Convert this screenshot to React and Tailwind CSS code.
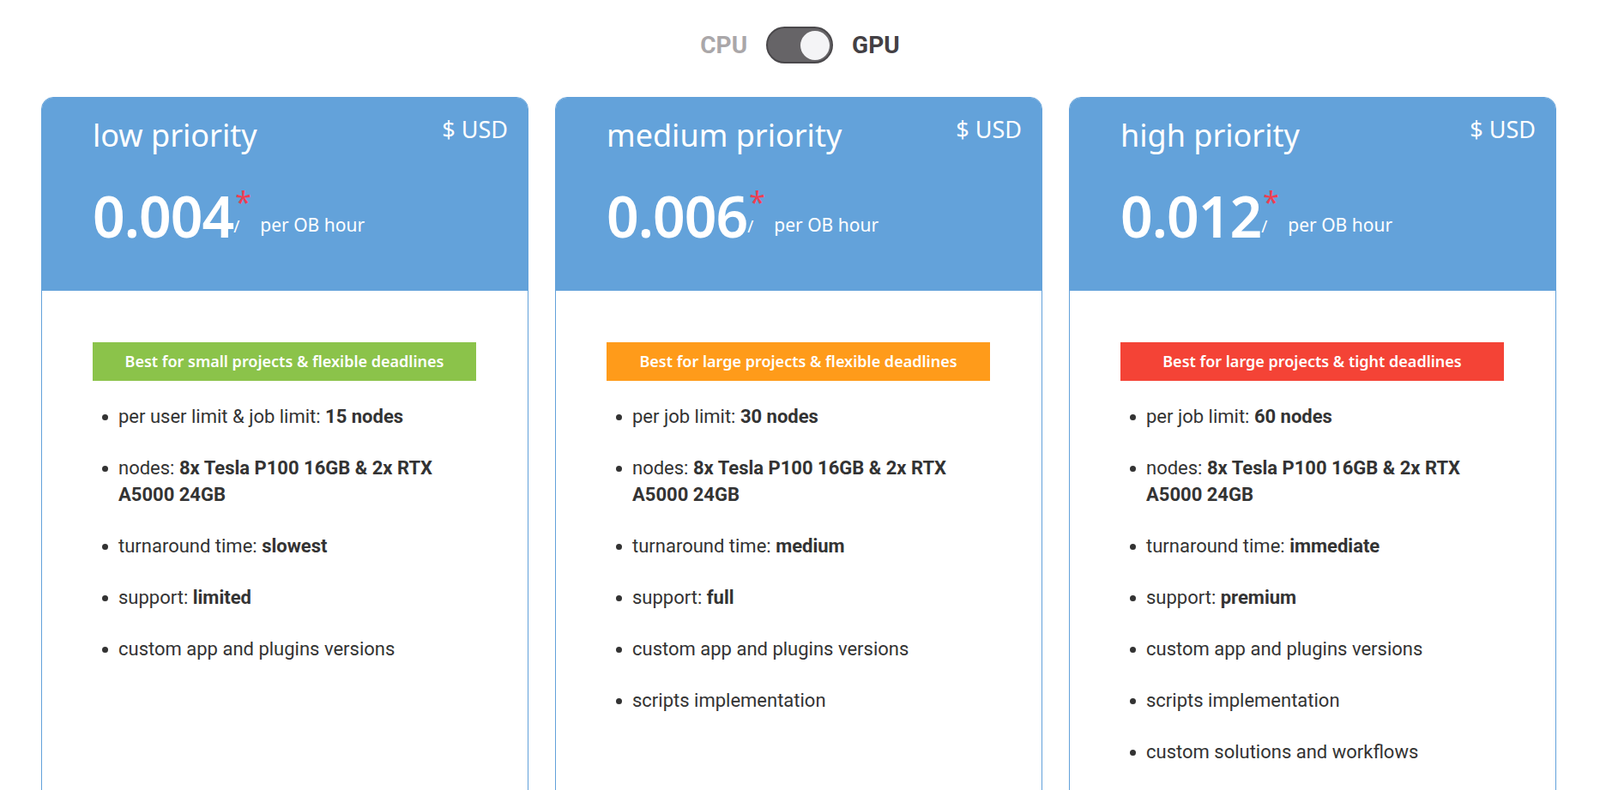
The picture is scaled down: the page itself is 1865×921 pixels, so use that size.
const cards = [
  { title: "low priority", price: "0.004", badge: "Best for small projects & flexible deadlines", color: "bg-[#8bc34a]",
    items: [["per user limit & job limit: ", "15 nodes"], ["nodes: ", "8x Tesla P100 16GB & 2x RTX A5000 24GB"], ["turnaround time: ", "slowest"], ["support: ", "limited"], ["custom app and plugins versions", ""]] },
  { title: "medium priority", price: "0.006", badge: "Best for large projects & flexible deadlines", color: "bg-[#ff9b1a]",
    items: [["per job limit: ", "30 nodes"], ["nodes: ", "8x Tesla P100 16GB & 2x RTX A5000 24GB"], ["turnaround time: ", "medium"], ["support: ", "full"], ["custom app and plugins versions", ""], ["scripts implementation", ""]] },
  { title: "high priority", price: "0.012", badge: "Best for large projects & tight deadlines", color: "bg-[#f44336]",
    items: [["per job limit: ", "60 nodes"], ["nodes: ", "8x Tesla P100 16GB & 2x RTX A5000 24GB"], ["turnaround time: ", "immediate"], ["support: ", "premium"], ["custom app and plugins versions", ""], ["scripts implementation", ""], ["custom solutions and workflows", ""]] },
];

export default function App() {
  return (
    <div className="w-[1865px] h-[921px] overflow-hidden bg-white">
      <div className="flex items-center justify-center pt-[30px] h-[113px] pb-[38px] gap-[22px] font-[family-name:Roboto,sans-serif] font-bold text-[28px]">
        <span className="text-[#aaa7a9]">CPU</span>
        <div className="w-[78px] h-[43px] rounded-full bg-[#666467] border-2 border-[#4a484b] flex items-center justify-end pr-[2px]">
          <div className="w-[34px] h-[34px] rounded-full bg-[#f4f4f6]"></div>
        </div>
        <span className="text-[#434044]">GPU</span>
      </div>
      <div className="flex gap-[31px] pl-[48px]">
        {cards.map((c) => (
          <div key={c.title} className="w-[568px] h-[900px] shrink-0 rounded-t-[14px] border border-[#62a1da] overflow-hidden">
            <div className="h-[225px] bg-[#63a2da] text-white font-[family-name:'Open_Sans',sans-serif] relative pl-[59px]">
              <div className="absolute right-[23px] top-[17px] text-[27px]">$ USD</div>
              <div className="text-[36px] pt-[20px] leading-[48px]">{c.title}</div>
              <div className="flex items-end mt-[34px]">
                <span className="text-[66px] font-semibold leading-[70px] tracking-[-1px]">{c.price}</span>
                <span className="relative text-[19px] mb-[8px]">/<span className="absolute -top-[40px] left-[2px] text-[#ef3e52] text-[34px]">*</span></span>
                <span className="text-[21px] ml-[24px] mb-[8px]">per OB hour</span>
              </div>
            </div>
            <div className="px-[59px] pt-[60px]">
              <div className={`${c.color} w-[447px] h-[45px] flex items-center justify-center text-white font-semibold text-[18px] font-[family-name:'Open_Sans',sans-serif]`}>{c.badge}</div>
              <ul className="mt-[26px] font-[family-name:Roboto,sans-serif] text-[22px] text-[#333] flex flex-col gap-[29px]">
                {c.items.map(([a, b], i) => (
                  <li key={i} className="flex leading-[31px]">
                    <span className="w-[30px] shrink-0 pl-[11px] flex pt-[13px]"><span className="w-[7px] h-[7px] rounded-full bg-[#333] block"></span></span>
                    <span className="w-[420px]">{a}<b className="font-bold">{b}</b></span>
                  </li>
                ))}
              </ul>
            </div>
          </div>
        ))}
      </div>
    </div>
  );
}
